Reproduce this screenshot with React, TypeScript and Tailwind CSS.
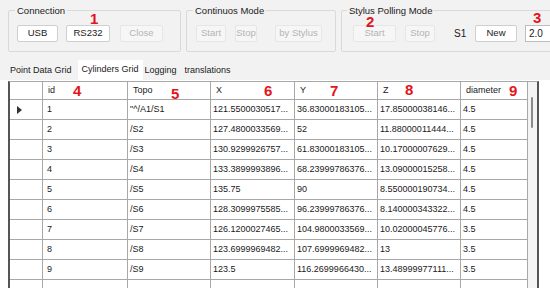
import React from "react";

const rows = [
  ["1", "\"^/A1/S1", "121.5500030517...", "36.83000183105...", "17.85000038146...", "4.5"],
  ["2", "/S2", "127.4800033569...", "52", "11.88000011444...", "4.5"],
  ["3", "/S3", "130.9299926757...", "61.83000183105...", "10.17000007629...", "4.5"],
  ["4", "/S4", "133.3899993896...", "68.23999786376...", "13.09000015258...", "4.5"],
  ["5", "/S5", "135.75", "90", "8.550000190734...", "4.5"],
  ["6", "/S6", "128.3099975585...", "96.23999786376...", "8.140000343322...", "4.5"],
  ["7", "/S7", "126.1200027465...", "104.9800033569...", "10.02000045776...", "3.5"],
  ["8", "/S8", "123.6999969482...", "107.6999969482...", "13", "3.5"],
  ["9", "/S9", "123.5", "116.2699966430...", "13.48999977111...", "3.5"],
  ["", "", "", "", "", ""],
];

const headers = ["id", "Topo", "X", "Y", "Z", "diameter"];
const colW = ["w-[85px]", "w-[83px]", "w-[84px]", "w-[83px]", "w-[83px]", "w-[67px]"];

function Btn({ label, w, disabled, cls = "" }: { label: string; w: string; disabled?: boolean; cls?: string }) {
  return (
    <div
      className={`${w} ${cls} h-[17px] shrink-0 flex items-center justify-center rounded-[2px] border text-[9.5px] ${
        disabled
          ? "bg-[#f6f6f6] border-[#e6e6e6] text-[#b4b4b4]"
          : "bg-white border-[#cfcfcf] text-[#1a1a1a]"
      }`}
    >
      {label}
    </div>
  );
}

function Red({ n, cls }: { n: string; cls: string }) {
  return (
    <div className={`absolute ${cls} text-[15px] font-bold leading-none text-[#e3141b]`}>{n}</div>
  );
}

export default function App() {
  return (
    <div
      className="relative w-[550px] h-[288px] overflow-hidden bg-[#f2f2f2] text-[#1a1a1a]"
      style={{ fontFamily: '"Liberation Sans", Arial, sans-serif' }}
    >
      {/* group boxes */}
      <div className="flex gap-[5px] pl-[8px] pt-[5px]">
        <fieldset className="w-[173px] h-[47px] border border-[#d9d9d9] rounded-[2px] shrink-0">
          <legend className="ml-[6px] px-[2px] text-[9.5px] leading-[11px]">Connection</legend>
          <div className="flex mt-[9px] ml-[8px]">
            <Btn label="USB" w="w-[41px]" />
            <Btn label="RS232" w="w-[44px]" cls="ml-[8px]" />
            <Btn label="Close" w="w-[43px]" cls="ml-[10px]" disabled />
          </div>
        </fieldset>
        <fieldset className="w-[150px] h-[47px] border border-[#d9d9d9] rounded-[2px] shrink-0">
          <legend className="ml-[6px] px-[2px] text-[9.5px] leading-[11px]">Continuos Mode</legend>
          <div className="flex mt-[9px] ml-[9px]">
            <Btn label="Start" w="w-[30px]" disabled />
            <Btn label="Stop" w="w-[22px]" cls="ml-[9px]" disabled />
            <Btn label="by Stylus" w="w-[47px]" cls="ml-[18px]" disabled />
          </div>
        </fieldset>
        <fieldset className="w-[230px] h-[47px] border border-[#d9d9d9] rounded-[2px] shrink-0">
          <legend className="ml-[5px] px-[2px] text-[9.5px] leading-[11px]">Stylus Polling Mode</legend>
          <div className="flex items-center mt-[9px] ml-[11px]">
            <Btn label="Start" w="w-[43px]" disabled />
            <Btn label="Stop" w="w-[30px]" cls="ml-[9px]" disabled />
            <div className="text-[10px] w-[21px] ml-[19px]">S1</div>
            <Btn label="New" w="w-[42px]" />
            <div className="ml-[8px] w-[40px] h-[17px] bg-white border border-[#bdbdbd] text-[10px] flex items-center pl-[3px]">
              2.0
            </div>
          </div>
        </fieldset>
      </div>

      {/* tabs */}
      <div className="flex items-end mt-[8px] h-[20px] pl-[4px] text-[9px]">
        <div className="h-[18px] px-[6px] flex items-center">Point Data Grid</div>
        <div className="h-[20px] px-[4px] flex items-center bg-white">Cylinders Grid</div>
        <div className="h-[18px] px-[2px] flex items-center">Logging</div>
        <div className="h-[18px] pl-[6px] pr-[4px] flex items-center">translations</div>
      </div>

      {/* grid */}
      <div className="bg-white pl-[8px] pt-[1px]">
        <div className="flex w-[531px] border-l-2 border-r-2 border-t border-l-[#555] border-r-[#555] border-t-[#a8a8a8]">
          <div className="flex flex-col w-[518px]">
            <div className="flex h-[18px] text-[9px]">
              <div className="w-[33px] shrink-0 border-r border-b border-[#a8a8a8]" />
              {headers.map((h, i) => (
                <div
                  key={h}
                  className={`${colW[i]} shrink-0 border-r border-b border-[#a8a8a8] flex items-center pl-[5px]`}
                >
                  {h}
                </div>
              ))}
            </div>
            {rows.map((r, ri) => (
              <div key={ri} className="flex h-[20px] text-[9px]">
                <div className="w-[33px] shrink-0 border-r border-b border-[#a8a8a8] flex items-center pl-[7px]">
                  {ri === 0 && (
                    <svg width="6" height="8" viewBox="0 0 6 8">
                      <path d="M0 0 L5 4 L0 8 Z" fill="#333" />
                    </svg>
                  )}
                </div>
                {r.map((c, ci) => (
                  <div
                    key={ci}
                    className={`${colW[ci]} shrink-0 border-r border-b border-[#a8a8a8] flex items-center ${
                      ci === 0 ? "pl-[4px]" : "pl-[2px]"
                    } whitespace-nowrap overflow-hidden`}
                  >
                    {c}
                  </div>
                ))}
              </div>
            ))}
          </div>
          <div className="w-[9px] bg-[#f4f4f4] relative">
            <div className="absolute left-[3px] top-[15px] w-[2px] h-[31px] bg-[#8a8a8a] rounded" />
          </div>
        </div>
      </div>

      <Red n="1" cls="left-[90px] top-[11px]" />
      <Red n="2" cls="left-[366px] top-[14px]" />
      <Red n="3" cls="left-[533px] top-[10px]" />
      <Red n="4" cls="left-[73px] top-[83px]" />
      <Red n="5" cls="left-[171px] top-[86px]" />
      <Red n="6" cls="left-[264px] top-[83px]" />
      <Red n="7" cls="left-[330px] top-[83px]" />
      <Red n="8" cls="left-[405px] top-[82px]" />
      <Red n="9" cls="left-[509px] top-[83px]" />
    </div>
  );
}
